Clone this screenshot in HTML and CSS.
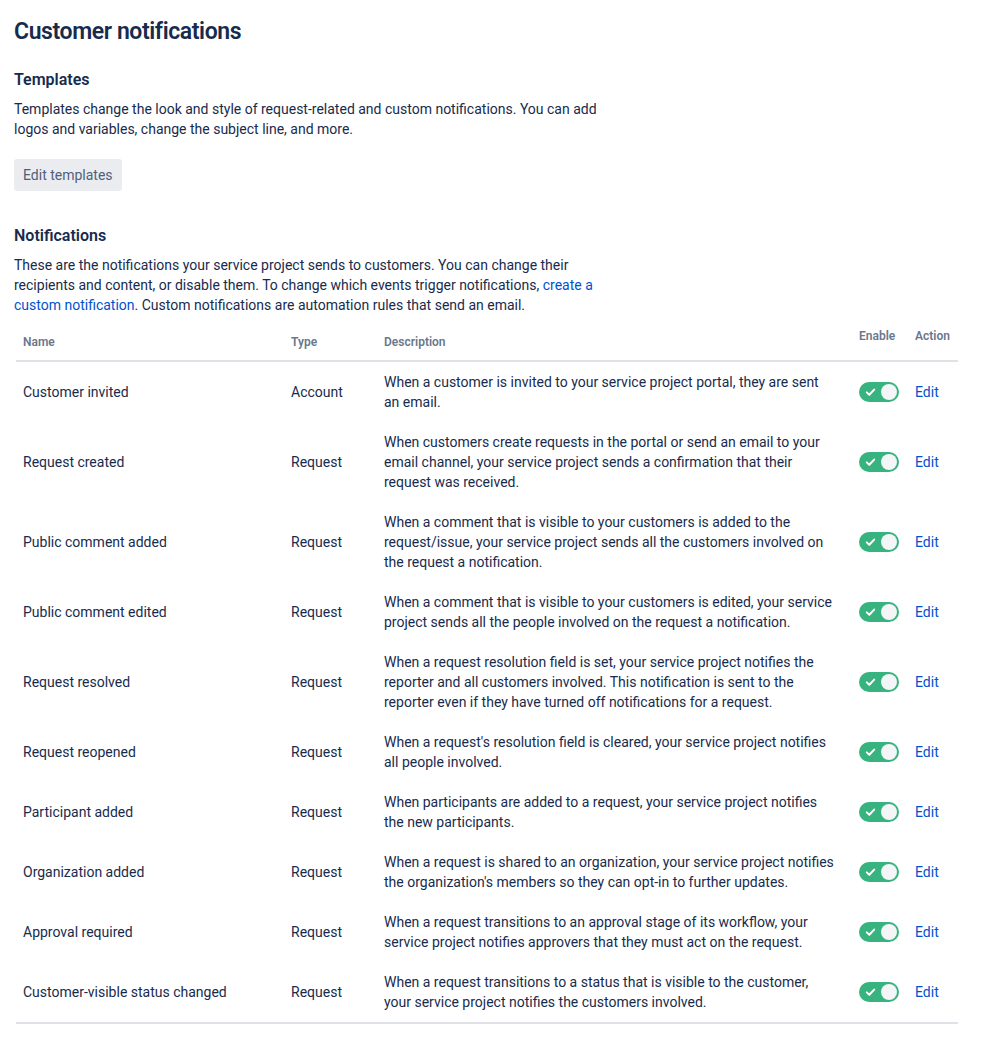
FILE: index.html
```html
<!DOCTYPE html>
<html lang="en">
<head>
<meta charset="utf-8">
<title>Customer notifications</title>
<link rel="stylesheet" href="styles.css">
</head>
<body>
<main class="page">
  <h1 class="title">Customer notifications</h1>

  <section class="section">
    <h2 class="section-title">Templates</h2>
    <p class="section-text">Templates change the look and style of request-related and custom notifications. You can add logos and variables, change the subject line, and more.</p>
    <button class="btn" type="button">Edit templates</button>
  </section>

  <section class="section section-notifications">
    <h2 class="section-title">Notifications</h2>
    <p class="section-text">These are the notifications your service project sends to customers. You can change their recipients and content, or disable them. To change which events trigger notifications, <a class="link" href="#">create a custom notification</a>. Custom notifications are automation rules that send an email.</p>

    <table class="table">
      <colgroup>
        <col class="col-name">
        <col class="col-type">
        <col class="col-desc">
        <col class="col-enable">
        <col class="col-action">
      </colgroup>
      <thead>
        <tr>
          <th>Name</th>
          <th>Type</th>
          <th>Description</th>
          <th class="th-top">Enable</th>
          <th class="th-top">Action</th>
        </tr>
      </thead>
      <tbody>
        <tr>
          <td>Customer invited</td>
          <td>Account</td>
          <td>When a customer is invited to your service project portal, they are sent an email.</td>
          <td><span class="toggle"><svg class="toggle-check" width="40" height="20" viewBox="0 0 40 20"><path d="M7.8 10.4 L10.3 12.8 L15.2 7.6" fill="none" stroke="#fff" stroke-width="2" stroke-linecap="round" stroke-linejoin="round"/><circle cx="30" cy="10" r="8" fill="#F4F5F7"/></svg></span></td>
          <td><a class="link" href="#">Edit</a></td>
        </tr>
        <tr>
          <td>Request created</td>
          <td>Request</td>
          <td>When customers create requests in the portal or send an email to your email channel, your service project sends a confirmation that their request was received.</td>
          <td><span class="toggle"><svg class="toggle-check" width="40" height="20" viewBox="0 0 40 20"><path d="M7.8 10.4 L10.3 12.8 L15.2 7.6" fill="none" stroke="#fff" stroke-width="2" stroke-linecap="round" stroke-linejoin="round"/><circle cx="30" cy="10" r="8" fill="#F4F5F7"/></svg></span></td>
          <td><a class="link" href="#">Edit</a></td>
        </tr>
        <tr>
          <td>Public comment added</td>
          <td>Request</td>
          <td>When a comment that is visible to your customers is added to the request/issue, your service project sends all the customers involved on the request a notification.</td>
          <td><span class="toggle"><svg class="toggle-check" width="40" height="20" viewBox="0 0 40 20"><path d="M7.8 10.4 L10.3 12.8 L15.2 7.6" fill="none" stroke="#fff" stroke-width="2" stroke-linecap="round" stroke-linejoin="round"/><circle cx="30" cy="10" r="8" fill="#F4F5F7"/></svg></span></td>
          <td><a class="link" href="#">Edit</a></td>
        </tr>
        <tr>
          <td>Public comment edited</td>
          <td>Request</td>
          <td>When a comment that is visible to your customers is edited, your service project sends all the people involved on the request a notification.</td>
          <td><span class="toggle"><svg class="toggle-check" width="40" height="20" viewBox="0 0 40 20"><path d="M7.8 10.4 L10.3 12.8 L15.2 7.6" fill="none" stroke="#fff" stroke-width="2" stroke-linecap="round" stroke-linejoin="round"/><circle cx="30" cy="10" r="8" fill="#F4F5F7"/></svg></span></td>
          <td><a class="link" href="#">Edit</a></td>
        </tr>
        <tr>
          <td>Request resolved</td>
          <td>Request</td>
          <td>When a request resolution field is set, your service project notifies the reporter and all customers involved. This notification is sent to the reporter even if they have turned off notifications for a request.</td>
          <td><span class="toggle"><svg class="toggle-check" width="40" height="20" viewBox="0 0 40 20"><path d="M7.8 10.4 L10.3 12.8 L15.2 7.6" fill="none" stroke="#fff" stroke-width="2" stroke-linecap="round" stroke-linejoin="round"/><circle cx="30" cy="10" r="8" fill="#F4F5F7"/></svg></span></td>
          <td><a class="link" href="#">Edit</a></td>
        </tr>
        <tr>
          <td>Request reopened</td>
          <td>Request</td>
          <td>When a request's resolution field is cleared, your service project notifies all people involved.</td>
          <td><span class="toggle"><svg class="toggle-check" width="40" height="20" viewBox="0 0 40 20"><path d="M7.8 10.4 L10.3 12.8 L15.2 7.6" fill="none" stroke="#fff" stroke-width="2" stroke-linecap="round" stroke-linejoin="round"/><circle cx="30" cy="10" r="8" fill="#F4F5F7"/></svg></span></td>
          <td><a class="link" href="#">Edit</a></td>
        </tr>
        <tr>
          <td>Participant added</td>
          <td>Request</td>
          <td>When participants are added to a request, your service project notifies the new participants.</td>
          <td><span class="toggle"><svg class="toggle-check" width="40" height="20" viewBox="0 0 40 20"><path d="M7.8 10.4 L10.3 12.8 L15.2 7.6" fill="none" stroke="#fff" stroke-width="2" stroke-linecap="round" stroke-linejoin="round"/><circle cx="30" cy="10" r="8" fill="#F4F5F7"/></svg></span></td>
          <td><a class="link" href="#">Edit</a></td>
        </tr>
        <tr>
          <td>Organization added</td>
          <td>Request</td>
          <td>When a request is shared to an organization, your service project notifies the organization's members so they can opt-in to further updates.</td>
          <td><span class="toggle"><svg class="toggle-check" width="40" height="20" viewBox="0 0 40 20"><path d="M7.8 10.4 L10.3 12.8 L15.2 7.6" fill="none" stroke="#fff" stroke-width="2" stroke-linecap="round" stroke-linejoin="round"/><circle cx="30" cy="10" r="8" fill="#F4F5F7"/></svg></span></td>
          <td><a class="link" href="#">Edit</a></td>
        </tr>
        <tr>
          <td>Approval required</td>
          <td>Request</td>
          <td>When a request transitions to an approval stage of its workflow, your service project notifies approvers that they must act on the request.</td>
          <td><span class="toggle"><svg class="toggle-check" width="40" height="20" viewBox="0 0 40 20"><path d="M7.8 10.4 L10.3 12.8 L15.2 7.6" fill="none" stroke="#fff" stroke-width="2" stroke-linecap="round" stroke-linejoin="round"/><circle cx="30" cy="10" r="8" fill="#F4F5F7"/></svg></span></td>
          <td><a class="link" href="#">Edit</a></td>
        </tr>
        <tr>
          <td>Customer-visible status changed</td>
          <td>Request</td>
          <td>When a request transitions to a status that is visible to the customer, your service project notifies the customers involved.</td>
          <td><span class="toggle"><svg class="toggle-check" width="40" height="20" viewBox="0 0 40 20"><path d="M7.8 10.4 L10.3 12.8 L15.2 7.6" fill="none" stroke="#fff" stroke-width="2" stroke-linecap="round" stroke-linejoin="round"/><circle cx="30" cy="10" r="8" fill="#F4F5F7"/></svg></span></td>
          <td><a class="link" href="#">Edit</a></td>
        </tr>
      </tbody>
    </table>
  </section>
</main>
</body>
</html>
```

FILE: styles.css
```css
* { box-sizing: border-box; }

html, body {
  margin: 0;
  padding: 0;
  background: #ffffff;
}

body {
  font-family: "Segoe UI", Roboto, "Noto Sans", "Liberation Sans", sans-serif;
  font-size: 14px;
  line-height: 20px;
  color: #172B4D;
}

.page {
  padding: 18px 0 0 14px;
  width: 958px;
}

.title {
  margin: 0;
  font-size: 23px;
  line-height: 28px;
  font-weight: 600;
  letter-spacing: -0.4px;
  color: #172B4D;
}

.section {
  margin-top: 24px;
}

.section-notifications {
  margin-top: 35px;
}

.section-title {
  margin: 0;
  font-size: 16px;
  line-height: 20px;
  font-weight: 600;
  color: #172B4D;
}

.section-text {
  margin: 9px 0 0;
  max-width: 600px;
}

.link {
  color: #0052CC;
  text-decoration: none;
}

.btn {
  margin-top: 20px;
  display: block;
  height: 32px;
  padding: 0 9px;
  border: none;
  border-radius: 3px;
  background: #EBECF0;
  color: #505F79;
  font-family: inherit;
  font-size: 14px;
  line-height: 32px;
}

.table {
  margin: 8px 0 0 2px;
  width: 942px;
  border-collapse: collapse;
  table-layout: fixed;
  border-bottom: 2px solid #DFE1E6;
}

.col-name { width: 267px; }
.col-type { width: 93px; }
.col-desc { width: 475px; }
.col-enable { width: 56px; }
.col-action { width: 51px; }

.table th {
  text-align: left;
  font-size: 12px;
  line-height: 16px;
  font-weight: 600;
  color: #6B778C;
  padding: 11px 8px 10px;
  vertical-align: top;
  border-bottom: 2px solid #DFE1E6;
}

.table th:first-child,
.table td:first-child {
  padding-left: 7px;
}

.table th.th-top {
  padding: 5px 8px 16px;
}

.table td {
  padding: 10px 8px;
  vertical-align: middle;
  line-height: 20px;
}

.table td:nth-child(3) {
  padding-right: 16px;
}

.toggle {
  display: block;
  width: 40px;
  height: 20px;
  border-radius: 10px;
  background: #36B37E;
}

.toggle-check {
  display: block;
}
```
